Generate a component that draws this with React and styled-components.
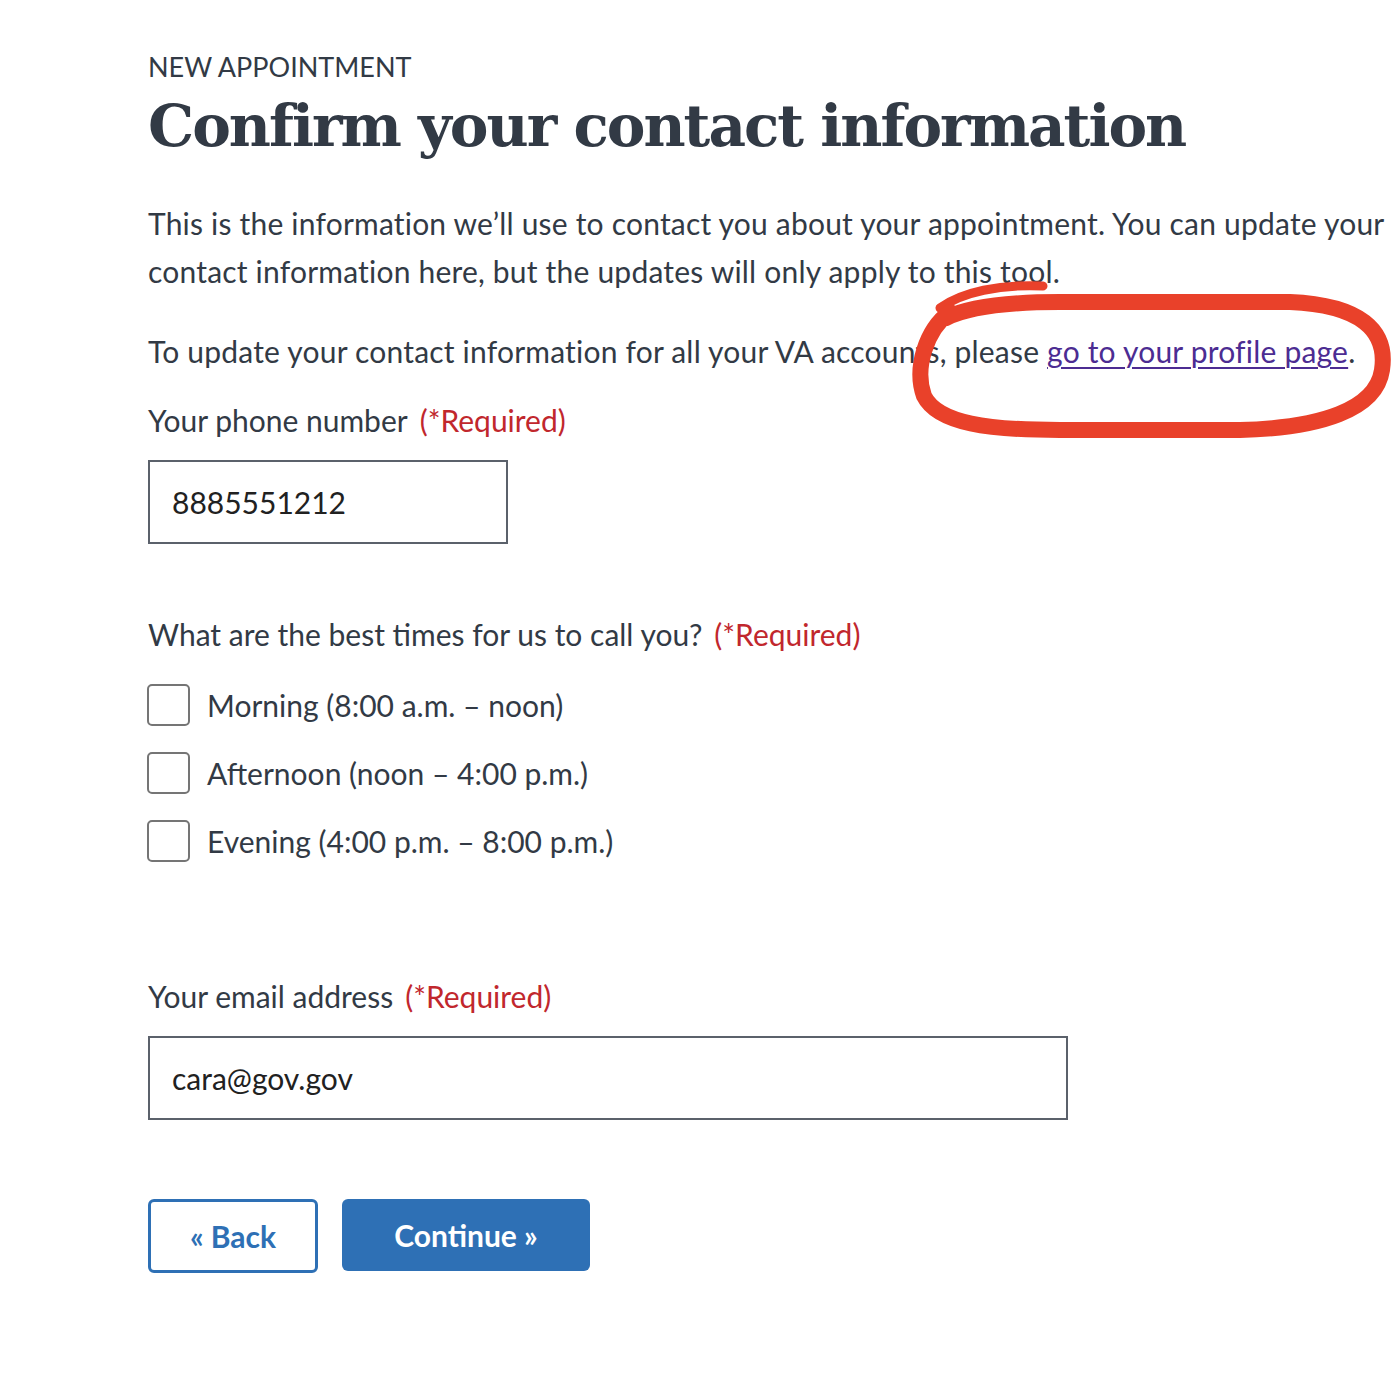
import React from 'react'
import styled, { createGlobalStyle } from 'styled-components'

const GlobalStyle = createGlobalStyle`
  body {
    margin: 0;
    background: #fff;
    font-family: Lato, "Liberation Sans", sans-serif;
    color: #323a45;
  }
`

const Page = styled.main`
  position: relative;
  padding: 49px 0 120px 148px;
  min-height: 1231px;
`

const Eyebrow = styled.div`
  font-size: 27px;
  line-height: 36px;
  text-transform: uppercase;
`

const Title = styled.h1`
  margin: 6px 0 0;
  font-family: "DejaVu Serif", "Liberation Serif", serif;
  font-weight: 700;
  font-size: 58px;
  line-height: 71px;
  letter-spacing: -2px;
  color: #323a45;
`

const Text = styled.p`
  margin: ${(p) => p.$top || 0}px 0 0;
  font-size: 30px;
  line-height: 48px;
  letter-spacing: 0.2px;
  max-width: 1244px;
`

const Link = styled.a`
  color: #4c2c92;
  text-decoration: underline;
  text-underline-offset: 4px;
  text-decoration-thickness: 2px;
`

const Field = styled.div`
  margin-top: ${(p) => p.$top || 0}px;
`

const Label = styled.label`
  display: block;
  font-size: 30px;
  line-height: 48px;
`

const Required = styled.span`
  color: #c1272d;
  margin-left: 12px;
`

const Input = styled.input`
  display: block;
  box-sizing: border-box;
  margin-top: 16px;
  width: ${(p) => p.$width}px;
  height: 84px;
  padding: 0 22px;
  border: 2px solid #5b616b;
  border-radius: 0;
  font-family: Lato, "Liberation Sans", sans-serif;
  font-size: 30px;
  color: #212121;
  background: #fff;
  outline: none;
`

const Options = styled.div`
  display: flex;
  flex-direction: column;
  gap: 26px;
  margin-top: 26px;
`

const Option = styled.label`
  display: flex;
  align-items: center;
  gap: 17px;
  font-size: 30px;
  line-height: 42px;
`

const Box = styled.input.attrs({ type: 'checkbox' })`
  appearance: none;
  margin: 0 0 0 -1px;
  width: 43px;
  height: 42px;
  box-sizing: border-box;
  border: 2px solid #757575;
  border-radius: 5px;
  background: #fff;
`

const Actions = styled.div`
  display: flex;
  align-items: flex-start;
  gap: 24px;
  margin-top: 79px;
`

const Button = styled.button`
  box-sizing: border-box;
  height: ${(p) => (p.$outline ? 74 : 72)}px;
  width: ${(p) => p.$width}px;
  border-radius: 6px;
  font-family: Lato, "Liberation Sans", sans-serif;
  font-weight: 700;
  font-size: 30px;
  color: ${(p) => (p.$outline ? '#2e70b5' : '#fff')};
  background: ${(p) => (p.$outline ? '#fff' : '#2e70b5')};
  border: ${(p) => (p.$outline ? '3px solid #2e70b5' : 'none')};
  cursor: pointer;
`

const Scribble = styled.svg`
  position: absolute;
  left: 0;
  top: 0;
  pointer-events: none;
`

const times = [
  'Morning (8:00 a.m. – noon)',
  'Afternoon (noon – 4:00 p.m.)',
  'Evening (4:00 p.m. – 8:00 p.m.)',
]

export default function App() {
  return (
    <>
      <GlobalStyle />
      <Page>
        <Eyebrow>New appointment</Eyebrow>
        <Title>Confirm your contact information</Title>
        <Text $top={37}>
          This is the information we’ll use to contact you about your appointment. You can update your
          contact information here, but the updates will only apply to this tool.
        </Text>
        <Text $top={32}>
          To update your contact information for all your VA accounts, please{' '}
          <Link href="#">go to your profile page</Link>.
        </Text>

        <Field $top={21}>
          <Label>
            Your phone number<Required>(*Required)</Required>
          </Label>
          <Input $width={360} defaultValue="8885551212" />
        </Field>

        <Field $top={66}>
          <Label>
            What are the best times for us to call you?<Required>(*Required)</Required>
          </Label>
          <Options>
            {times.map((t) => (
              <Option key={t}>
                <Box />
                {t}
              </Option>
            ))}
          </Options>
        </Field>

        <Field $top={110}>
          <Label>
            Your email address<Required>(*Required)</Required>
          </Label>
          <Input $width={920} defaultValue="cara@gov.gov" />
        </Field>

        <Actions>
          <Button $outline $width={170}>« Back</Button>
          <Button $width={248}>Continue »</Button>
        </Actions>

        <Scribble width="1392" height="1400" viewBox="0 0 1392 1400">
          <path
            d="M1043 286 C1000 284, 962 292, 940 308"
            fill="none"
            stroke="#e9412a"
            strokeWidth="9"
            strokeLinecap="round"
          />
          <path
            d="M950 312 C926 330, 914 368, 924 396 C938 424, 990 430, 1060 430 L1240 430 C1320 428, 1376 410, 1382 370 C1388 330, 1360 305, 1290 302 L1060 302 C1000 302, 966 308, 946 318"
            fill="none"
            stroke="#e9412a"
            strokeWidth="16"
            strokeLinecap="round"
            strokeLinejoin="round"
          />
        </Scribble>
      </Page>
    </>
  )
}
